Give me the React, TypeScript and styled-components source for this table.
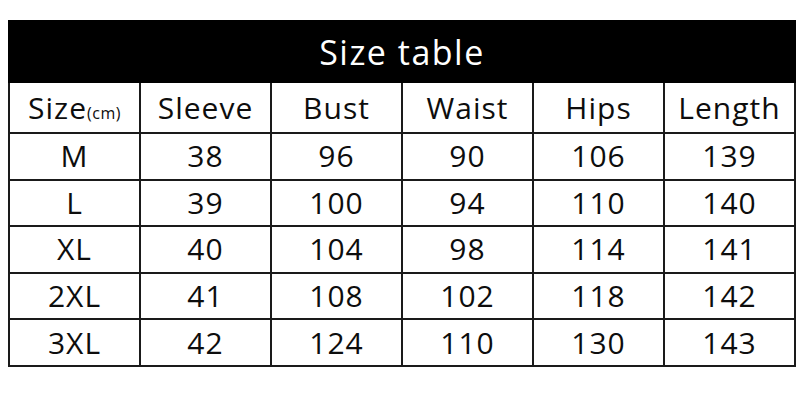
import React from "react";
import styled, { createGlobalStyle } from "styled-components";

const Global = createGlobalStyle`
  html, body { margin: 0; padding: 0; background: #fff; }
  body { font-family: "Open Sans", "Noto Sans", sans-serif; color: #111; }
`;

const Page = styled.div`
  width: 800px;
  height: 400px;
  padding: 20px 0 0 8px;
  box-sizing: border-box;
`;

const Table = styled.table`
  width: 788px;
  border-collapse: collapse;
  table-layout: fixed;
  border: 2px solid #1a1a1a;
`;

const Title = styled.th`
  background: #000;
  color: #fff;
  height: 59px;
  padding: 0;
  font-size: 34px;
  letter-spacing: 1.5px;
  font-weight: 400;
  text-align: center;
  border: 2px solid #000;
`;

const Cell = styled.td<{ $h: number }>`
  height: ${(p) => p.$h}px;
  padding: 0;
  border: 2px solid #1a1a1a;
  text-align: center;
  vertical-align: middle;
  font-size: 30px;
  letter-spacing: 1px;
  line-height: 1;
  color: #0d0d0d;
`;

const Unit = styled.span`
  font-size: 16px;
  letter-spacing: 0.5px;
`;

const heads = ["Sleeve", "Bust", "Waist", "Hips", "Length"];
const rows: string[][] = [
  ["M", "38", "96", "90", "106", "139"],
  ["L", "39", "100", "94", "110", "140"],
  ["XL", "40", "104", "98", "114", "141"],
  ["2XL", "41", "108", "102", "118", "142"],
  ["3XL", "42", "124", "110", "130", "143"],
];

export default function App() {
  return (
    <Page>
      <Global />
      <Table>
        <thead>
          <tr>
            <Title colSpan={6}>Size table</Title>
          </tr>
        </thead>
        <tbody>
          <tr>
            <Cell $h={49}>
              Size<Unit>(cm)</Unit>
            </Cell>
            {heads.map((h) => (
              <Cell key={h} $h={49}>
                {h}
              </Cell>
            ))}
          </tr>
          {rows.map((r) => (
            <tr key={r[0]}>
              {r.map((c, i) => (
                <Cell key={i} $h={44.6}>
                  {c}
                </Cell>
              ))}
            </tr>
          ))}
        </tbody>
      </Table>
    </Page>
  );
}
